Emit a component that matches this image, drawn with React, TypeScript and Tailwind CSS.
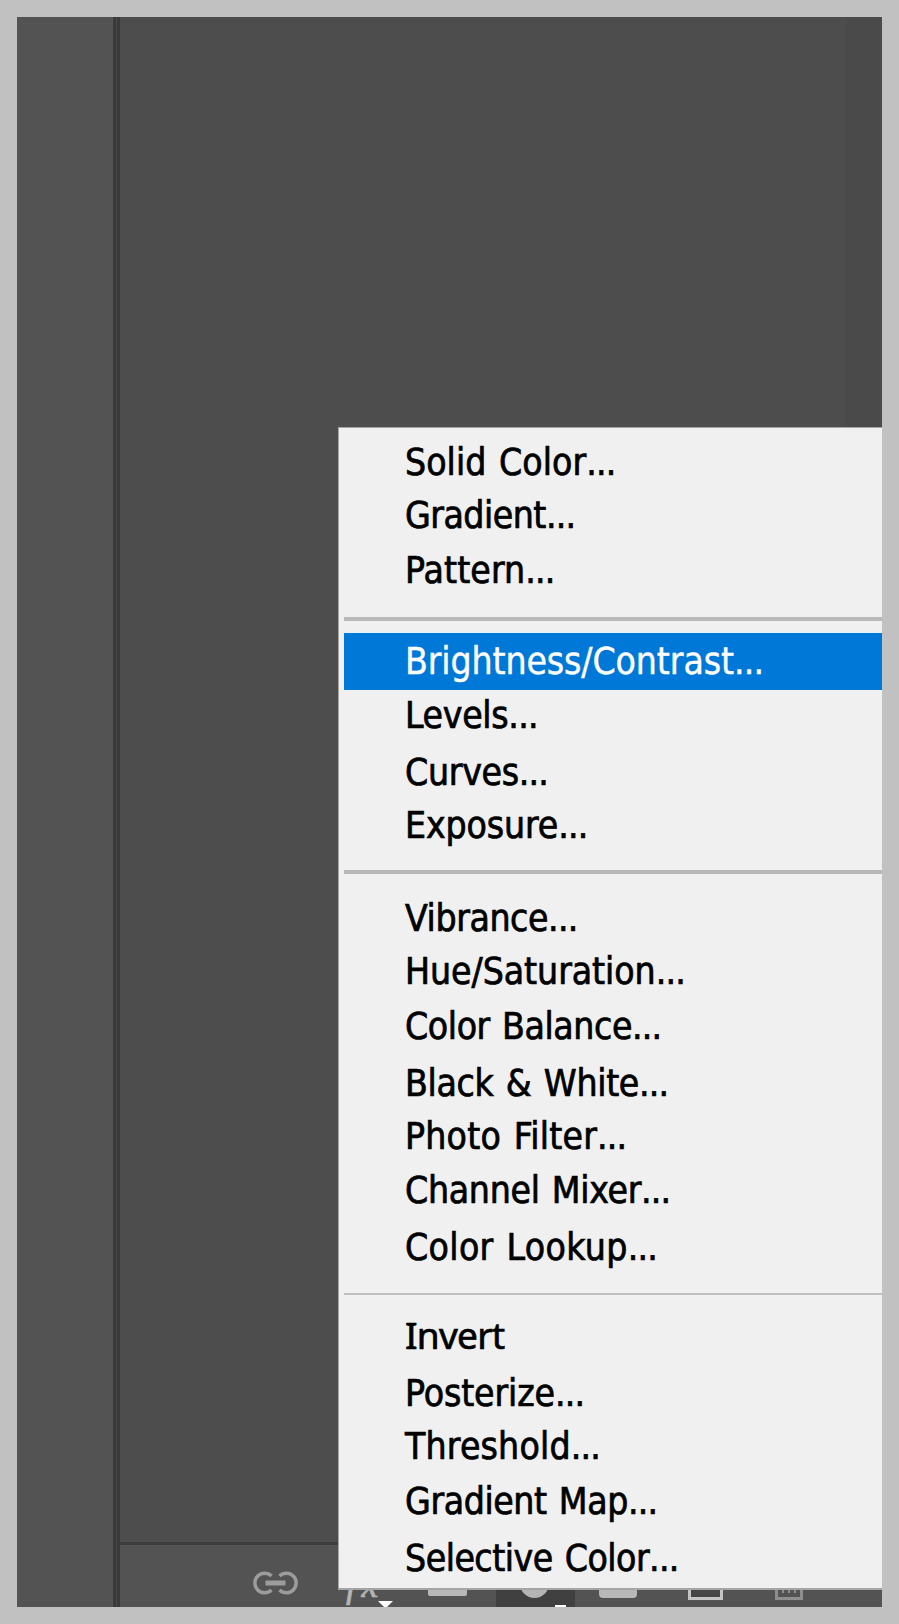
import React from 'react';
import clsx from 'clsx';

interface MenuItem {
  label: string;
  more?: boolean;
  row: string;
  text?: string;
  active?: boolean;
}

const groups: MenuItem[][] = [
  [
    { label: 'Solid Color', more: true, row: 'h-[53px]', text: 'tracking-[0.05px]' },
    { label: 'Gradient', more: true, row: 'h-[55px]', text: 'tracking-[-0.5px]' },
    { label: 'Pattern', more: true, row: 'h-[75px]', text: 'tracking-[0.1px]' },
  ],
  [
    { label: 'Brightness/Contrast', more: true, row: 'h-[57px] -mb-[3px]', text: 'tracking-[-0.1px]', active: true },
    { label: 'Levels', more: true, row: 'h-[57px]', text: 'tracking-[-0.3px]' },
    { label: 'Curves', more: true, row: 'h-[53px]', text: 'tracking-[-0.3px]' },
    { label: 'Exposure', more: true, row: 'h-[73px]', text: 'tracking-[-0.1px]' },
  ],
  [
    { label: 'Vibrance', more: true, row: 'h-[53px]', text: 'tracking-[-0.4px]' },
    { label: 'Hue/Saturation', more: true, row: 'h-[55px]', text: 'tracking-[-0.05px]' },
    { label: 'Color Balance', more: true, row: 'h-[57px]', text: 'tracking-[-0.4px]' },
    { label: 'Black & White', more: true, row: 'h-[53px]', text: 'tracking-[-0.3px]' },
    { label: 'Photo Filter', more: true, row: 'h-[54px]', text: 'tracking-[0.2px]' },
    { label: 'Channel Mixer', more: true, row: 'h-[57px]', text: 'tracking-[-0.3px]' },
    { label: 'Color Lookup', more: true, row: 'h-[74px]', text: 'tracking-[0.35px]' },
  ],
  [
    { label: 'Invert', row: 'h-[57px]', text: "font-['Noto_Sans',sans-serif] leading-none tracking-[-0.7px]" },
    { label: 'Posterize', more: true, row: 'h-[53px]', text: 'tracking-[-0.1px]' },
    { label: 'Threshold', more: true, row: 'h-[55px]', text: 'tracking-[0.2px]' },
    { label: 'Gradient Map', more: true, row: 'h-[57px]', text: 'tracking-[-0.4px]' },
    { label: 'Selective Color', more: true, row: 'h-[57px]', text: 'tracking-[-0.5px]' },
  ],
];

// rule above each group and the space around it
const rules = [
  '',
  'h-[4px] mb-[12px] bg-[#b9b9b9]',
  'h-[4px] mb-[16px] bg-[#b9b9b9]',
  'h-[2px] mb-[13px] bg-[#bebebe]',
];

function MenuRow({ item }: { item: MenuItem }) {
  return (
    <div
      className={clsx(
        'whitespace-pre pl-[61px] leading-[57px] [word-spacing:2px]',
        item.row,
        item.active
          ? 'bg-[#0078d7] text-white [-webkit-text-stroke:0.4px_#fff]'
          : 'text-black [-webkit-text-stroke:0.7px_#000]',
      )}
    >
      <span className={item.text}>{item.label}</span>
      {item.more && <span className="tracking-[-0.8px]">...</span>}
    </div>
  );
}

function AdjustmentMenu() {
  return (
    <div className="absolute left-[338px] top-[427px] h-[1163px] w-[544px] border-l border-t border-b-2 border-[#a5a5a5] bg-[#f0f0f0] pl-[5px] pt-[6px] font-['DejaVu_Sans_Condensed','DejaVu_Sans',sans-serif] text-[37px] [font-stretch:condensed]">
      {groups.map((group, i) => (
        <div key={i}>
          {i > 0 && <div className={rules[i]} />}
          {group.map((item) => (
            <MenuRow key={item.label} item={item} />
          ))}
        </div>
      ))}
    </div>
  );
}

function LayerBar() {
  return (
    <div className="flex h-[62px] items-start overflow-hidden bg-[#535353]">
      <svg className="ml-[133px] mt-[26px] shrink-0" width="46" height="24" viewBox="0 0 46 24" fill="none" stroke="#9c9c9c" strokeWidth="3.5">
        <path d="M18.5 5A9.800 9.800 0 1 0 18.500 19" />
        <path d="M26.500 5A9.800 9.800 0 1 1 26.500 19" />
        <path d="M12.500 12H32.500" strokeWidth="5" />
      </svg>
      <div className="ml-[47px] mt-[19px] w-[32px] shrink-0 whitespace-nowrap font-['Liberation_Serif',serif] text-[38px] italic leading-[40px] tracking-[5px] text-[#b4b4b4] [-webkit-text-stroke:0.7px_#b4b4b4]">fx</div>
      <svg className="mt-[56px] shrink-0" width="16" height="6" viewBox="0 0 16 6">
        <path d="M0 0H15L9 6H6Z" fill="#fff" />
      </svg>
      <div className="ml-[34px] mt-[26px] h-[25px] w-[39px] shrink-0 rounded-[2px] bg-[#b8b8b8]" />
      <div className="ml-[29px] flex h-full w-[79px] shrink-0 items-start bg-[#404040]">
        <div className="ml-[24px] mt-[24px] size-[29px] shrink-0 rounded-full bg-[#b4b4b4]" />
        <div className="ml-[6px] mt-[60px] h-[2px] w-[11px] bg-white" />
      </div>
      <div className="ml-[24px] mt-[26px] h-[27px] w-[38px] shrink-0 rounded-[4px] bg-[#b8b8b8]" />
      <div className="ml-[51px] mt-[26px] h-[29px] w-[35px] shrink-0 border-[3px] border-[#c4c4c4] bg-[#454545]" />
      <svg className="ml-[51px] mt-[26px] shrink-0" width="30" height="30" viewBox="0 0 30 30" fill="none" stroke="#8e8e8e">
        <path d="M2.500 0V27.500H27.500V0" strokeWidth="3" />
        <path d="M9 5V22M15 5V22M21 5V22" strokeWidth="2" />
      </svg>
    </div>
  );
}

export default function App() {
  return (
    <div className="relative h-[1624px] w-[899px] overflow-hidden bg-[#c1c1c1] p-[17px]">
      <div className="flex h-[1590px] w-[865px]">
        <div className="w-[96px] bg-[#535353]" />
        <div className="w-[7px] border-x-[3px] border-[#393939] bg-[#484848]" />
        <div className="flex flex-1 flex-col bg-[#4d4d4d]">
          <div className="flex flex-1 justify-end">
            <div className="w-[36px] bg-[#4a4a4a]" />
          </div>
          <div className="h-[3px] bg-[#3c3c3c]" />
          <LayerBar />
        </div>
      </div>
      <AdjustmentMenu />
    </div>
  );
}
